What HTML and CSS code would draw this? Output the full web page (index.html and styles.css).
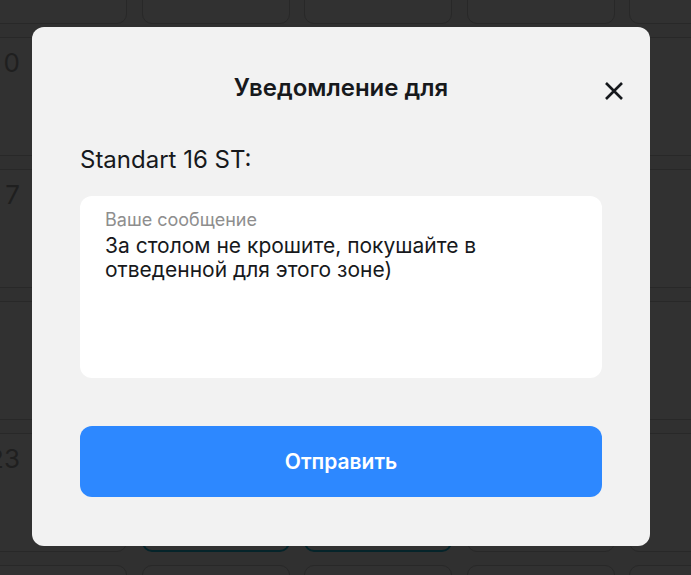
FILE: index.html
```html
<!DOCTYPE html>
<html lang="ru">
<head>
<meta charset="utf-8">
<title>Уведомление</title>
<link rel="stylesheet" href="styles.css">
</head>
<body>
<div class="board">
  <div class="grid">
    <div class="cell"></div><div class="cell"></div><div class="cell"></div><div class="cell"></div><div class="cell"></div>
    <div class="cell"><span class="hour">0</span></div><div class="cell"></div><div class="cell"></div><div class="cell"></div><div class="cell"></div>
    <div class="cell"><span class="hour">7</span></div><div class="cell"></div><div class="cell"></div><div class="cell"></div><div class="cell"></div>
    <div class="cell"></div><div class="cell"></div><div class="cell"></div><div class="cell"></div><div class="cell"></div>
    <div class="cell"><span class="hour">23</span></div><div class="cell busy"></div><div class="cell busy"></div><div class="cell"></div><div class="cell"></div>
    <div class="cell"></div><div class="cell"></div><div class="cell"></div><div class="cell"></div><div class="cell"></div>
  </div>
</div>

<div class="modal">
  <button class="close" aria-label="Закрыть">
    <svg width="20" height="20" viewBox="0 0 20 20"><path d="M2 2 L18 18 M18 2 L2 18" stroke="#15181c" stroke-width="2.6" stroke-linecap="butt" fill="none"/></svg>
  </button>
  <h2 class="title">Уведомление для</h2>
  <p class="place">Standart 16 ST:</p>
  <div class="field">
    <div class="field-label">Ваше сообщение</div>
    <div class="field-text">За столом не крошите, покушайте в отведенной для этого зоне)</div>
  </div>
  <button class="send">Отправить</button>
</div>
</body>
</html>
```

FILE: styles.css
```css
html, body {
  margin: 0;
  padding: 0;
  height: 100%;
  overflow: hidden;
}
body {
  background: #303030;
  font-family: Inter, "Noto Sans", sans-serif;
}
.board {
  height: 100%;
  overflow: hidden;
}
.grid {
  display: grid;
  grid-template-columns: repeat(5, 148px);
  grid-auto-rows: 119px;
  column-gap: 14.5px;
  row-gap: 13px;
  margin-left: -21px;
  margin-top: -95px;
}
.cell {
  border: 1px solid #282828;
  border-radius: 10px;
  background: #313131;
  box-sizing: border-box;
  padding: 10px 0 0 0;
}
.cell.busy {
  border: 2px solid #05242a;
}
.hour {
  display: flex;
  justify-content: flex-end;
  width: 40px;
  font-size: 26px;
  line-height: 30px;
  color: #1f1f1f;
}

.modal {
  position: absolute;
  left: 32px;
  top: 27px;
  width: 618px;
  height: 519px;
  box-sizing: border-box;
  background: #f2f2f2;
  border-radius: 12px;
  padding: 47px 48px 0;
  display: flex;
  flex-direction: column;
}
.close {
  position: absolute;
  top: 54px;
  right: 26px;
  width: 20px;
  height: 20px;
  padding: 0;
  border: 0;
  background: none;
}
.close svg { display: block; }
.title {
  margin: 0;
  text-align: center;
  font-size: 24px;
  line-height: 28px;
  font-weight: 600;
  color: #17191c;
}
.place {
  margin: 44px 0 0;
  font-size: 24px;
  line-height: 28px;
  font-weight: 400;
  color: #17191c;
}
.field {
  margin-top: 22px;
  height: 182px;
  box-sizing: border-box;
  background: #ffffff;
  border-radius: 12px;
  padding: 13px 25px 0;
}
.field-label {
  font-size: 18px;
  line-height: 22px;
  color: #8e8e8e;
}
.field-text {
  margin-top: 3px;
  font-size: 21px;
  line-height: 24px;
  color: #17191c;
}
.send {
  margin-top: 48px;
  height: 71px;
  border: 0;
  border-radius: 12px;
  background: #2d88ff;
  color: #ffffff;
  font-family: Inter, "Noto Sans", sans-serif;
  font-size: 21px;
  font-weight: 600;
}
```
